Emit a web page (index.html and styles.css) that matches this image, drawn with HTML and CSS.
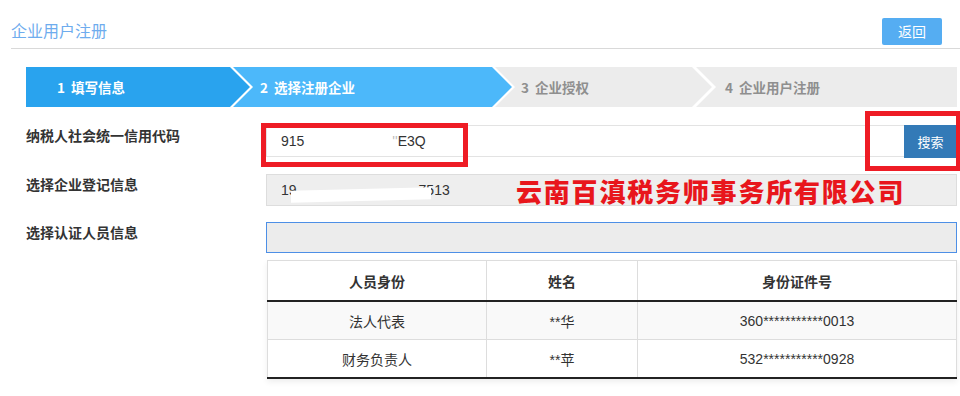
FILE: index.html
```html
<!DOCTYPE html>
<html lang="zh-CN">

<head>
    <meta charset="UTF-8">
    <meta name="viewport" content="width=device-width, initial-scale=1.0">
    <title>企业用户注册</title>
    <link rel="stylesheet" href="styles.css">
</head>

<body>
    <div class="head">
        <h1 class="title">企业用户注册</h1>
        <button class="btn-back">返回</button>
    </div>

    <div class="steps">
        <div class="step step-first step-on">1&nbsp;&nbsp;填写信息</div>
        <div class="step step-mid step-cur">2&nbsp;&nbsp;选择注册企业</div>
        <div class="step step-mid step-three">3&nbsp;&nbsp;企业授权</div>
        <div class="step step-last">4&nbsp;&nbsp;企业用户注册</div>
    </div>

    <div class="form">
        <div class="row">
            <div class="label">纳税人社会统一信用代码</div>
            <div class="field">
                <div class="input input-code">915<span class="gap"></span><span class="faint">''</span>E3Q</div>
                <button class="btn-search">搜索</button>
                <div class="mark mark-code"></div>
                <div class="mark mark-search"></div>
            </div>
        </div>

        <div class="row">
            <div class="label">选择企业登记信息</div>
            <div class="field">
                <div class="input input-grey">19<span class="blot"></span>7513</div>
                <div class="stamp">云南百滇税务师事务所有限公司</div>
            </div>
        </div>

        <div class="row row-last">
            <div class="label">选择认证人员信息</div>
            <div class="field">
                <div class="input input-focus"></div>
            </div>
        </div>

        <div class="row">
            <div class="label"></div>
            <table class="people">
                <thead>
                    <tr>
                        <th class="c1">人员身份</th>
                        <th class="c2">姓名</th>
                        <th>身份证件号</th>
                    </tr>
                </thead>
                <tbody>
                    <tr class="odd">
                        <td>法人代表</td>
                        <td>**华</td>
                        <td>360***********0013</td>
                    </tr>
                    <tr class="end">
                        <td>财务负责人</td>
                        <td>**苹</td>
                        <td>532***********0928</td>
                    </tr>
                </tbody>
            </table>
        </div>
    </div>
</body>

</html>
```

FILE: styles.css
```css
body {
    margin: 0;
    padding: 0;
    background: #fff;
    font-family: "Noto Sans CJK SC", "Liberation Sans", sans-serif;
    color: #333;
}

.head {
    margin-left: 11px;
    height: 49px;
    box-sizing: border-box;
    padding: 18px 18px 4px 0;
    border-bottom: 1px solid #d9d9d9;
    display: flex;
    align-items: center;
    justify-content: space-between;
}

.title {
    margin: 0 0 3px 0;
    font-size: 16px;
    font-weight: normal;
    color: #6eacee;
    line-height: 20px;
}

.btn-back {
    width: 60px;
    height: 27px;
    border: 0;
    border-radius: 2px;
    background: #55adf2;
    color: #fff;
    font-family: inherit;
    font-size: 14px;
    padding: 0;
}

/* step bar */
.steps {
    display: flex;
    margin: 18px 0 0 26px;
    height: 40px;
}

.step {
    height: 40px;
    line-height: 40px;
    font-size: 13.5px;
    font-weight: bold;
    color: #8f8f8f;
    background: #ececec;
    padding-left: 27px;
    box-sizing: border-box;
    white-space: nowrap;
}

.step-first {
    width: 224px;
    padding-left: 31px;
    clip-path: polygon(0 0, calc(100% - 20px) 0, 100% 50%, calc(100% - 20px) 100%, 0 100%);
}

.step-mid {
    clip-path: polygon(0 0, calc(100% - 20px) 0, 100% 50%, calc(100% - 20px) 100%, 0 100%, 20px 50%);
    margin-left: -17px;
}

.step-cur {
    width: 279px;
}

.step-three {
    width: 217px;
    padding-left: 26px;
}

.step-last {
    flex: 1;
    margin-left: -16px;
    margin-right: 3px;
    padding-left: 29px;
    clip-path: polygon(0 0, 100% 0, 100% 100%, 0 100%, 20px 50%);
}

.step-on {
    background: #29a3ee;
    color: #fff;
}

.step-cur {
    background: #4cb8fa;
    color: #fff;
}

/* form */
.form {
    margin-top: 18px;
    padding-left: 26px;
}

.row {
    display: flex;
    margin-bottom: 16px;
}

.row-last {
    margin-bottom: 7px;
}

.label {
    width: 240px;
    flex-shrink: 0;
    font-size: 14px;
    font-weight: bold;
    color: #333;
    line-height: 18px;
    padding-top: 1px;
}

.field {
    flex: 1;
    display: flex;
    position: relative;
    margin-right: 3px;
}

.input {
    flex: 1;
    height: 32px;
    box-sizing: border-box;
    line-height: 30px;
    padding-left: 14px;
    font-family: "Liberation Sans", sans-serif;
    font-size: 14px;
    color: #333;
    border: 1px solid #e3e3e3;
}

.input-code {
    background: #fff;
    border-right: 0;
}

.gap {
    display: inline-block;
    width: 88px;
}

.faint {
    color: #bbb;
}

.input-grey {
    background: #eee;
    border-color: #ddd;
}

.blot {
    display: inline-block;
    position: relative;
    z-index: 1;
    width: 140px;
    height: 12px;
    vertical-align: -6px;
    margin: 0 -12px 0 -6px;
    background: #fff;
    transform: skewY(-1.5deg);
}

.input-focus {
    height: 31px;
    background: #ececec;
    border-color: #4d8fe6;
}

.btn-search {
    width: 53px;
    height: 33px;
    border: 0;
    background: #337ab7;
    color: #fff;
    font-family: inherit;
    font-size: 13px;
    padding: 0;
}

/* red marks drawn over the screenshot */
.mark {
    position: absolute;
    border: 5px solid #ee1c25;
    box-sizing: border-box;
}

.mark-code {
    left: -5px;
    top: -2px;
    width: 207px;
    height: 44px;
}

.mark-search {
    right: -4px;
    top: -14px;
    width: 96px;
    height: 60px;
}

.stamp {
    position: absolute;
    left: 250px;
    top: 1px;
    font-family: "Noto Sans CJK SC", serif;
    font-weight: 900;
    font-size: 26px;
    letter-spacing: 1.8px;
    line-height: 32px;
    color: #e8161c;
    white-space: nowrap;
}

/* people table */
.people {
    flex: 1;
    margin: 0 3px 0 1px;
    border-collapse: collapse;
    font-size: 14px;
    border-bottom: 2px solid #222;
    box-shadow: 0 3px 6px rgba(0, 0, 0, 0.07);
}

.people th,
.people td {
    text-align: center;
    padding: 0;
    border-left: 1px solid #ddd;
    border-right: 1px solid #ddd;
}

.people th {
    height: 39px;
    font-weight: bold;
    color: #333;
    border-top: 1px solid #ddd;
    border-bottom: 2px solid #222;
}

.people td {
    height: 37px;
    border-bottom: 1px solid #ddd;
    font-family: "Liberation Sans", "Noto Sans CJK SC", sans-serif;
    color: #333;
}

.people .end td {
    border-bottom: 2px solid #222;
}

.people .odd td {
    background: #f9f9f9;
}

.c1 {
    width: 218px;
}

.c2 {
    width: 150px;
}
```
